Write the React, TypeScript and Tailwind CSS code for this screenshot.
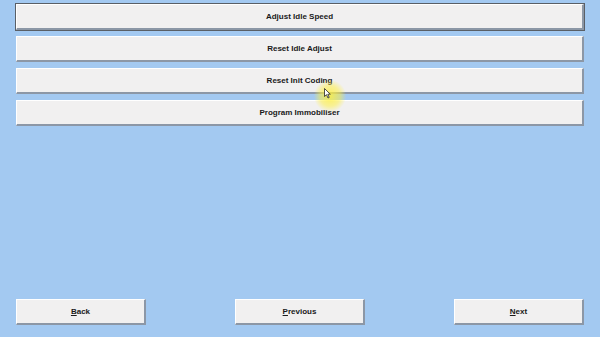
const FUNCTIONS = ['Adjust Idle Speed', 'Reset Idle Adjust', 'Reset Init Coding', 'Program Immobiliser']

function WinButton({ children, focused = false, className = '' }: { children: React.ReactNode; focused?: boolean; className?: string }) {
  return (
    <button
      className={`h-[26px] bg-[#f1f0f0] text-[8px] font-bold text-[#1a1a1a] border-t border-l border-t-[#ffffff] border-l-[#ffffff] border-r-2 border-b-2 border-r-[#8c97a6] border-b-[#8c97a6] ${
        focused ? 'outline outline-1 outline-[#5a5f66]' : ''
      } ${className}`}
      style={{ fontFamily: '"Liberation Sans", Arial, sans-serif' }}
    >
      {children}
    </button>
  )
}

function Mnemonic({ label }: { label: string }) {
  return (
    <>
      <span className="underline">{label[0]}</span>
      {label.slice(1)}
    </>
  )
}

export default function App() {
  return (
    <div className="relative w-[600px] h-[337px] bg-[#a3c9f1] overflow-hidden flex flex-col justify-between pt-[4px] pb-[12px] px-[16px]">
      <div className="flex flex-col gap-[6px]">
        {FUNCTIONS.map((f, i) => (
          <WinButton key={f} focused={i === 0} className="w-full">
            {f}
          </WinButton>
        ))}
      </div>

      <div className="flex justify-between">
        <WinButton className="w-[130px]">
          <Mnemonic label="Back" />
        </WinButton>
        <WinButton className="w-[130px]">
          <Mnemonic label="Previous" />
        </WinButton>
        <WinButton className="w-[130px]">
          <Mnemonic label="Next" />
        </WinButton>
      </div>

      {/* cursor highlight from the screen recording */}
      <div className="absolute left-[314px] top-[80px] w-[32px] h-[32px] rounded-full bg-[radial-gradient(circle,rgba(255,240,60,0.85)_0%,rgba(255,240,60,0.5)_45%,rgba(255,240,60,0)_72%)] pointer-events-none" />
      <svg className="absolute left-[324px] top-[88px] pointer-events-none" width="7" height="11" viewBox="0 0 7 11">
        <path d="M0.5 0.5 L0.5 8.5 L2.5 6.7 L4 10 L5.2 9.4 L3.8 6.2 L6.3 6.2 Z" fill="#ffffff" stroke="#222" strokeWidth="0.8" />
      </svg>
    </div>
  )
}
